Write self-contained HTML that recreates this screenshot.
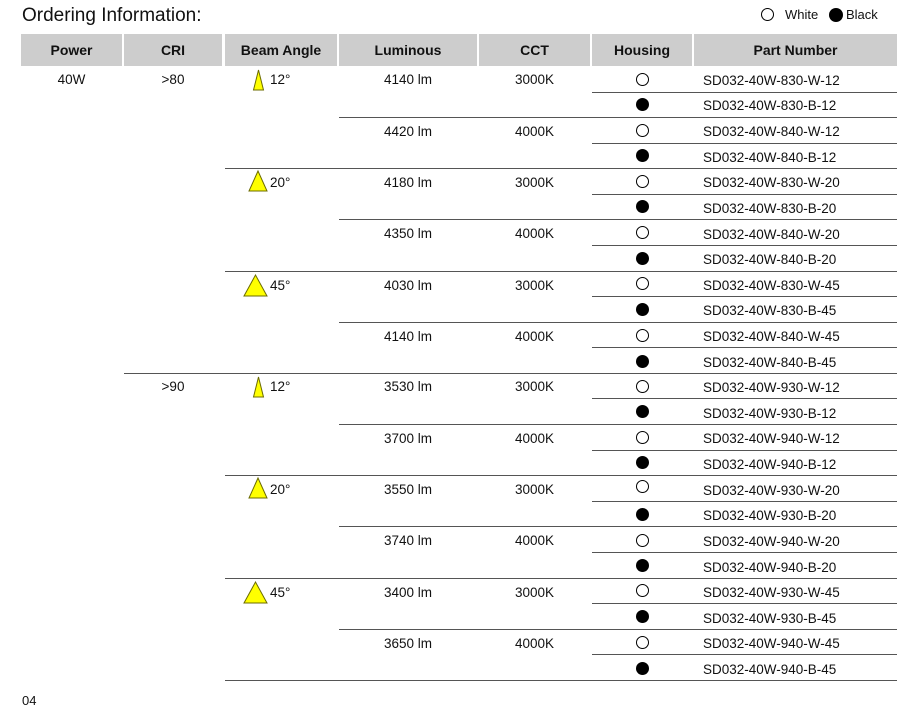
<!DOCTYPE html>
<html><head><meta charset="utf-8"><style>
*{margin:0;padding:0;box-sizing:border-box}
body{width:921px;height:698px;overflow:hidden;background:#fff;font-family:"Liberation Sans",Arial,sans-serif;color:#111;position:relative}
.a{position:absolute}
.h{position:absolute;top:34px;height:32px;background:#cdcdcd;font-weight:bold;font-size:14px;line-height:32px;text-align:center;color:#111}
.t{position:absolute;font-size:13.5px;line-height:16px;white-space:nowrap}
.c{text-align:center}
.ln{position:absolute;height:1px;background:#555;right:24px}
.ow{position:absolute;left:636px;width:13px;height:13px;border:1.4px solid #000;border-radius:50%}
.ob{position:absolute;left:636px;width:13px;height:13px;background:#000;border-radius:50%}
</style></head><body>
<div class="a" style="left:22px;top:4px;font-size:19px;line-height:24px">Ordering Information:</div>
<div class="a" style="left:761px;top:8px;width:13px;height:13px;border:1.3px solid #000;border-radius:50%"></div>
<div class="a" style="left:785px;top:6px;font-size:13px;line-height:17px">White</div>
<div class="a" style="left:829px;top:8px;width:14px;height:14px;background:#000;border-radius:50%"></div>
<div class="a" style="left:846px;top:6px;font-size:13px;line-height:17px">Black</div>

<div class="h" style="left:21px;width:101px">Power</div>
<div class="h" style="left:124px;width:98px">CRI</div>
<div class="h" style="left:225px;width:112px">Beam Angle</div>
<div class="h" style="left:339px;width:138px">Luminous</div>
<div class="h" style="left:479px;width:111px">CCT</div>
<div class="h" style="left:592px;width:100px">Housing</div>
<div class="h" style="left:694px;width:203px">Part Number</div>

<div class="t c" style="left:21px;width:101px;top:72px">40W</div>
<div class="t c" style="left:124px;width:98px;top:72px">&gt;80</div>
<div class="t c" style="left:124px;width:98px;top:379px">&gt;90</div>

<svg class="a" style="left:0;top:0" width="921" height="698">
<g fill="#ffff00" stroke="#6b6b00" stroke-width="1">
<polygon points="258.5,70 253.5,90 263.5,90"/>
<polygon points="258,171 249,191 267,191"/>
<polygon points="255.5,275 244,296 267,296"/>
<polygon points="258.5,377 253.5,397 263.5,397"/>
<polygon points="258,478 249,498 267,498"/>
<polygon points="255.5,582 244,603 267,603"/>
</g></svg>
<div class="t" style="left:270px;top:72px">12°</div>
<div class="t" style="left:270px;top:175px">20°</div>
<div class="t" style="left:270px;top:278px">45°</div>
<div class="t" style="left:270px;top:379px">12°</div>
<div class="t" style="left:270px;top:482px">20°</div>
<div class="t" style="left:270px;top:585px">45°</div>

<div class="t c" style="left:339px;width:138px;top:72px">4140 lm</div><div class="t c" style="left:479px;width:111px;top:72px">3000K</div>
<div class="t c" style="left:339px;width:138px;top:124px">4420 lm</div><div class="t c" style="left:479px;width:111px;top:124px">4000K</div>
<div class="t c" style="left:339px;width:138px;top:175px">4180 lm</div><div class="t c" style="left:479px;width:111px;top:175px">3000K</div>
<div class="t c" style="left:339px;width:138px;top:226px">4350 lm</div><div class="t c" style="left:479px;width:111px;top:226px">4000K</div>
<div class="t c" style="left:339px;width:138px;top:278px">4030 lm</div><div class="t c" style="left:479px;width:111px;top:278px">3000K</div>
<div class="t c" style="left:339px;width:138px;top:329px">4140 lm</div><div class="t c" style="left:479px;width:111px;top:329px">4000K</div>
<div class="t c" style="left:339px;width:138px;top:379px">3530 lm</div><div class="t c" style="left:479px;width:111px;top:379px">3000K</div>
<div class="t c" style="left:339px;width:138px;top:431px">3700 lm</div><div class="t c" style="left:479px;width:111px;top:431px">4000K</div>
<div class="t c" style="left:339px;width:138px;top:482px">3550 lm</div><div class="t c" style="left:479px;width:111px;top:482px">3000K</div>
<div class="t c" style="left:339px;width:138px;top:533px">3740 lm</div><div class="t c" style="left:479px;width:111px;top:533px">4000K</div>
<div class="t c" style="left:339px;width:138px;top:585px">3400 lm</div><div class="t c" style="left:479px;width:111px;top:585px">3000K</div>
<div class="t c" style="left:339px;width:138px;top:636px">3650 lm</div><div class="t c" style="left:479px;width:111px;top:636px">4000K</div>

<div class="ow" style="top:73px"></div><div class="t" style="left:703px;top:73px">SD032-40W-830-W-12</div>
<div class="ob" style="top:98px"></div><div class="t" style="left:703px;top:98px">SD032-40W-830-B-12</div>
<div class="ow" style="top:124px"></div><div class="t" style="left:703px;top:124px">SD032-40W-840-W-12</div>
<div class="ob" style="top:149px"></div><div class="t" style="left:703px;top:150px">SD032-40W-840-B-12</div>
<div class="ow" style="top:175px"></div><div class="t" style="left:703px;top:175px">SD032-40W-830-W-20</div>
<div class="ob" style="top:200px"></div><div class="t" style="left:703px;top:201px">SD032-40W-830-B-20</div>
<div class="ow" style="top:226px"></div><div class="t" style="left:703px;top:227px">SD032-40W-840-W-20</div>
<div class="ob" style="top:252px"></div><div class="t" style="left:703px;top:252px">SD032-40W-840-B-20</div>
<div class="ow" style="top:277px"></div><div class="t" style="left:703px;top:278px">SD032-40W-830-W-45</div>
<div class="ob" style="top:303px"></div><div class="t" style="left:703px;top:303px">SD032-40W-830-B-45</div>
<div class="ow" style="top:329px"></div><div class="t" style="left:703px;top:329px">SD032-40W-840-W-45</div>
<div class="ob" style="top:355px"></div><div class="t" style="left:703px;top:355px">SD032-40W-840-B-45</div>
<div class="ow" style="top:380px"></div><div class="t" style="left:703px;top:380px">SD032-40W-930-W-12</div>
<div class="ob" style="top:405px"></div><div class="t" style="left:703px;top:406px">SD032-40W-930-B-12</div>
<div class="ow" style="top:431px"></div><div class="t" style="left:703px;top:431px">SD032-40W-940-W-12</div>
<div class="ob" style="top:456px"></div><div class="t" style="left:703px;top:457px">SD032-40W-940-B-12</div>
<div class="ow" style="top:480px"></div><div class="t" style="left:703px;top:483px">SD032-40W-930-W-20</div>
<div class="ob" style="top:508px"></div><div class="t" style="left:703px;top:508px">SD032-40W-930-B-20</div>
<div class="ow" style="top:534px"></div><div class="t" style="left:703px;top:534px">SD032-40W-940-W-20</div>
<div class="ob" style="top:559px"></div><div class="t" style="left:703px;top:560px">SD032-40W-940-B-20</div>
<div class="ow" style="top:584px"></div><div class="t" style="left:703px;top:585px">SD032-40W-930-W-45</div>
<div class="ob" style="top:610px"></div><div class="t" style="left:703px;top:611px">SD032-40W-930-B-45</div>
<div class="ow" style="top:636px"></div><div class="t" style="left:703px;top:636px">SD032-40W-940-W-45</div>
<div class="ob" style="top:662px"></div><div class="t" style="left:703px;top:662px">SD032-40W-940-B-45</div>

<div class="ln" style="left:592px;top:92px"></div>
<div class="ln" style="left:339px;top:117px"></div>
<div class="ln" style="left:592px;top:143px"></div>
<div class="ln" style="left:225px;top:168px"></div>
<div class="ln" style="left:592px;top:194px"></div>
<div class="ln" style="left:339px;top:219px"></div>
<div class="ln" style="left:592px;top:245px"></div>
<div class="ln" style="left:225px;top:271px"></div>
<div class="ln" style="left:592px;top:296px"></div>
<div class="ln" style="left:339px;top:322px"></div>
<div class="ln" style="left:592px;top:347px"></div>
<div class="ln" style="left:124px;top:373px"></div>
<div class="ln" style="left:592px;top:398px"></div>
<div class="ln" style="left:339px;top:424px"></div>
<div class="ln" style="left:592px;top:450px"></div>
<div class="ln" style="left:225px;top:475px"></div>
<div class="ln" style="left:592px;top:501px"></div>
<div class="ln" style="left:339px;top:526px"></div>
<div class="ln" style="left:592px;top:552px"></div>
<div class="ln" style="left:225px;top:578px"></div>
<div class="ln" style="left:592px;top:603px"></div>
<div class="ln" style="left:339px;top:629px"></div>
<div class="ln" style="left:592px;top:654px"></div>
<div class="ln" style="left:225px;top:680px"></div>

<div class="a" style="left:22px;top:693px;font-size:13px;line-height:16px">04</div>
</body></html>
